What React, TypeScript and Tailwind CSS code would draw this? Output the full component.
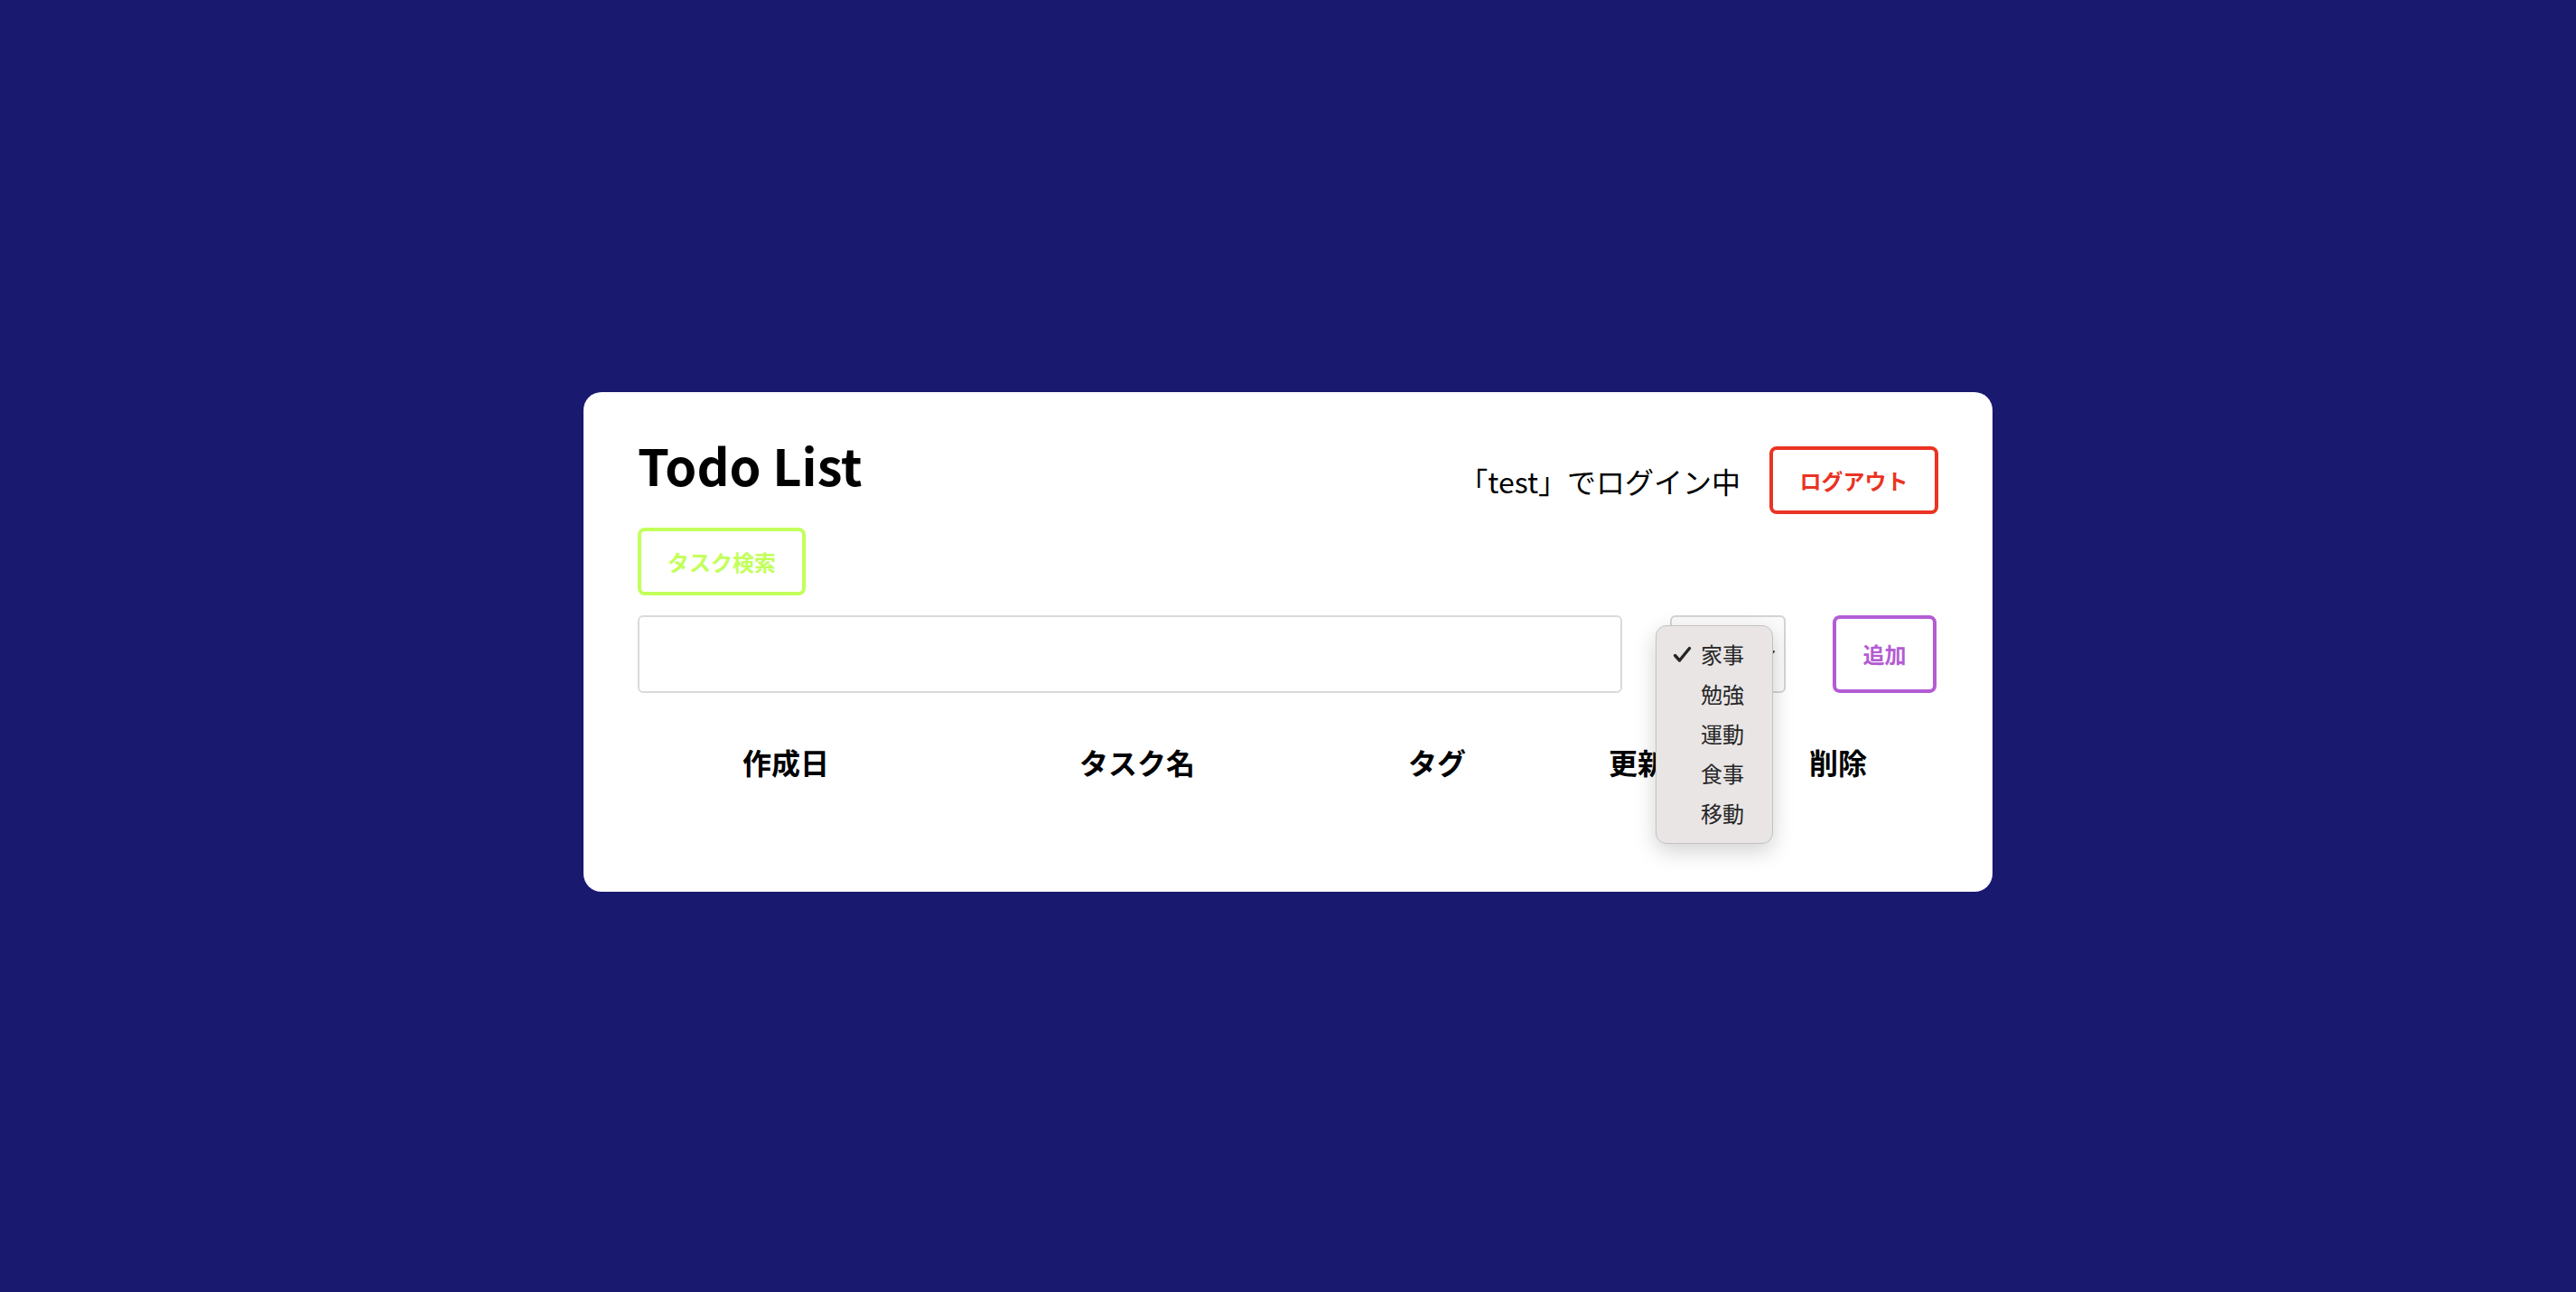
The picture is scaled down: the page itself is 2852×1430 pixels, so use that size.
const tags = ["家事", "勉強", "運動", "食事", "移動"];
const columns = ["作成日", "タスク名", "タグ", "更新", "削除"];

const font = { fontFamily: '"Noto Sans CJK JP", "Noto Sans", sans-serif' };

const TagMenu = () => (
  <div className="absolute left-[-16px] top-[11px] z-10 w-[130px] rounded-[12px] border border-[#c4c2c2] bg-[#e9e5e5] pt-[9px] pb-[11px] shadow-[0_8px_24px_rgba(0,0,0,0.18)]">
    {tags.map((tag, i) => (
      <div key={tag} className="relative flex h-[44px] items-center pl-[49px] text-[24px] text-[#262626]">
        {i === 0 && (
          <svg
            className="absolute left-[18px] top-[13px]"
            width="21"
            height="19"
            viewBox="0 0 21 19"
            fill="none"
          >
            <path d="M2.5 10.5 L7.5 16 L18.5 2.5" stroke="#262626" strokeWidth="3.4" strokeLinecap="round" strokeLinejoin="round" />
          </svg>
        )}
        {tag}
      </div>
    ))}
  </div>
);

const App = () => {
  return (
    <div className="flex min-h-screen w-full items-center justify-center bg-[#191970]" style={font}>
      <div className="mb-[9px] w-[1560px] rounded-[20px] bg-white p-[60px]">
        <div className="flex h-[75px] items-start justify-between">
          <h1 className="text-[56px] font-bold leading-[40px] text-black">Todo List</h1>
          <div className="flex h-[75px] items-center gap-[32px]">
            <span className="text-[32px] text-black">「test」でログイン中</span>
            <button className="h-[75px] w-[187px] rounded-[8px] border-4 border-[#ea3323] bg-white text-[24px] font-bold text-[#ea3323]">
              ログアウト
            </button>
          </div>
        </div>

        <button className="mt-[15px] h-[75px] w-[186px] rounded-[8px] border-4 border-[#c2ff5a] bg-white text-[24px] font-bold text-[#c2ff5a]">
          タスク検索
        </button>

        <div className="mt-[22px] flex h-[86px] items-center">
          <input className="h-[86px] w-[1090px] rounded-[6px] border-2 border-[#dadada] px-4 text-[28px] outline-none" />
          <div className="relative ml-[53px] h-[86px] w-[128px]">
            <div className="flex h-full w-full items-center justify-end rounded-[6px] border-2 border-[#d4d4d4] bg-[#fbfbfb] pr-[10px]">
              <svg width="14" height="10" viewBox="0 0 14 10" fill="none">
                <path d="M1 2 L7 8 L13 2" stroke="#333" strokeWidth="2" strokeLinecap="round" />
              </svg>
            </div>
            <TagMenu />
          </div>
          <button className="ml-[52px] h-[86px] w-[115px] rounded-[8px] border-4 border-[#b35cd3] bg-white text-[24px] font-bold text-[#b35cd3]">
            追加
          </button>
        </div>

        <div className="mt-[53px] grid grid-cols-[328px_450px_214px_230px_214px]">
          {columns.map((c) => (
            <div key={c} className="flex h-[46px] items-center justify-center text-[32px] font-bold text-black">
              {c}
            </div>
          ))}
        </div>
        <div className="h-[61px]" />
      </div>
    </div>
  );
};

export default App;
